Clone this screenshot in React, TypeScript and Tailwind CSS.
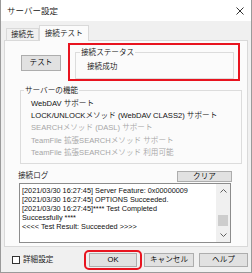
import React from 'react';

const logLines = [
  '[2021/03/30 16:27:45] Server Feature: 0x00000009',
  '[2021/03/30 16:27:45] OPTIONS Succeeded.',
  '[2021/03/30 16:27:45]**** Test Completed',
  'Successfully ****',
  '<<<< Test Result: Succeeded >>>>',
];

const features = [
  { label: 'WebDAV サポート', enabled: true },
  { label: 'LOCK/UNLOCKメソッド (WebDAV CLASS2) サポート', enabled: true },
  { label: 'SEARCHメソッド (DASL) サポート', enabled: false },
  { label: 'TeamFile 拡張SEARCHメソッド サポート', enabled: false },
  { label: 'TeamFile 拡張SEARCHメソッド 利用可能', enabled: false },
];

/**
 * 和文部分だけ少し細くする（欧文は Liberation Sans の通常ウェイトのまま）
 */
const T: React.FC<{ children: string }> = ({ children }) => (
  <>
    {children.split(/([\u3000-\u9fff\uff00-\uffef]+)/).map((part, i) =>
      i % 2 === 1 ? (
        <span key={i} className="font-[350]">
          {part}
        </span>
      ) : (
        part
      )
    )}
  </>
);

/**
 * Win10 風の押しボタン
 */
const Button: React.FC<{ label: string; className?: string }> = ({ label, className = '' }) => (
  <div
    className={`flex items-center justify-center bg-[#e1e1e1] border border-[#adadad] text-black ${className}`}
  >
    <T>{label}</T>
  </div>
);

export default function App() {
  return (
    <div className="w-[252px] h-[273px] bg-[#f0f0f0] border border-t-0 border-[#9a9a9a] flex flex-col text-[7.6px] leading-[10px] text-[#111] font-[family-name:'Liberation_Sans','Noto_Sans_CJK_JP',sans-serif]">
      {/* タイトルバー */}
      <div className="h-[21px] bg-white flex items-center justify-between pl-[6px] pr-[6px] shrink-0">
        <span className="text-[8.5px]">
          <T>サーバー設定</T>
        </span>
        <svg width="8" height="8" viewBox="0 0 8 8" className="mr-[1px]">
          <path d="M0.5 0.5 L7.5 7.5 M7.5 0.5 L0.5 7.5" stroke="#333" strokeWidth="1" fill="none" />
        </svg>
      </div>

      <div className="px-[3px] pt-[4px] flex flex-col">
        {/* タブ */}
        <div className="flex items-end h-[15px] pl-[2px]">
          <div className="h-[12px] px-[4px] flex items-center border border-b-0 border-[#d9d9d9] bg-[#f0f0f0]">
            <T>接続先</T>
          </div>
          <div className="relative z-10 -mb-px h-[16px] px-[5px] flex items-center border border-b-0 border-[#d9d9d9] bg-[#fbfbfb]">
            <T>接続テスト</T>
          </div>
        </div>

        {/* タブページ */}
        <div className="h-[207px] border border-[#d9d9d9] bg-[#fbfbfb] flex flex-col">
          <div className="flex items-start pt-[2px]">
            <Button label="テスト" className="ml-[16px] mt-[12px] w-[40px] h-[16px] border-[#7a7a7a]" />
            <div className="ml-[7px] w-[172px] h-[38px] border-2 border-[#e8141f] pl-[5px] pt-[3px]">
              <fieldset className="w-[159px] h-[31px] border border-[#dcdcdc] pl-[11px]">
                <legend className="ml-[-7px] px-[1px] leading-[9px]">
                  <T>接続ステータス</T>
                </legend>
                <div className="mt-[5px]">
                  <T>接続成功</T>
                </div>
              </fieldset>
            </div>
          </div>

          <fieldset className="ml-[15px] mt-[5px] w-[222px] h-[78px] border border-[#dcdcdc] pl-[10px]">
            <legend className="ml-[-7px] px-[1px] leading-[9px]">
              <T>サーバーの機能</T>
            </legend>
            <div className="flex flex-col mt-[3px]">
              {features.map((f) => (
                <div
                  key={f.label}
                  className={`h-[12.2px] flex items-center whitespace-nowrap ${f.enabled ? 'text-[#111]' : 'text-[#a6a6a6]'}`}
                >
                  <span>
                    <T>{f.label}</T>
                  </span>
                </div>
              ))}
            </div>
          </fieldset>

          <div className="flex items-end justify-between ml-[13px] mr-[15px] mt-[7px]">
            <span className="mb-[1px]">
              <T>接続ログ</T>
            </span>
            <Button label="クリア" className="w-[55px] h-[11px]" />
          </div>

          <div className="ml-[14px] mt-[1px] w-[212px] h-[60px] border border-[#8c8c8c] bg-white flex">
            <div className="flex-1 pl-[2px] pt-[2px] flex flex-col text-[7.3px]">
              {logLines.map((line) => (
                <div key={line} className="h-[9px] leading-[9px] whitespace-nowrap">
                  {line}
                </div>
              ))}
            </div>
            <div className="w-[14px] bg-[#f0f0f0] flex flex-col items-center">
              <svg width="7" height="4" viewBox="0 0 7 4" className="mt-[5px]">
                <path d="M0.5 3.5 L3.5 0.5 L6.5 3.5" stroke="#606060" fill="none" strokeWidth="1" />
              </svg>
              <div className="mt-[22px] w-[10px] h-[11px] bg-[#cdcdcd]" />
              <svg width="7" height="4" viewBox="0 0 7 4" className="mt-auto mb-[5px]">
                <path d="M0.5 0.5 L3.5 3.5 L6.5 0.5" stroke="#606060" fill="none" strokeWidth="1" />
              </svg>
            </div>
          </div>
        </div>

        {/* 下部ボタン */}
        <div className="flex items-center mt-[3px] h-[20px]">
          <div className="ml-[8px] w-[8px] h-[8px] border border-[#333] bg-white" />
          <span className="ml-[3px]">
            <T>詳細設定</T>
          </span>
          <div className="ml-auto border-2 border-[#e8141f] rounded-[5px] px-[3px] py-[1px]">
            <Button label="OK" className="w-[48px] h-[14px] border-[#0078d7]" />
          </div>
          <Button label="キャンセル" className="ml-[2px] w-[50px] h-[14px]" />
          <Button label="ヘルプ" className="ml-[5px] w-[49px] h-[14px]" />
        </div>
      </div>
    </div>
  );
}
